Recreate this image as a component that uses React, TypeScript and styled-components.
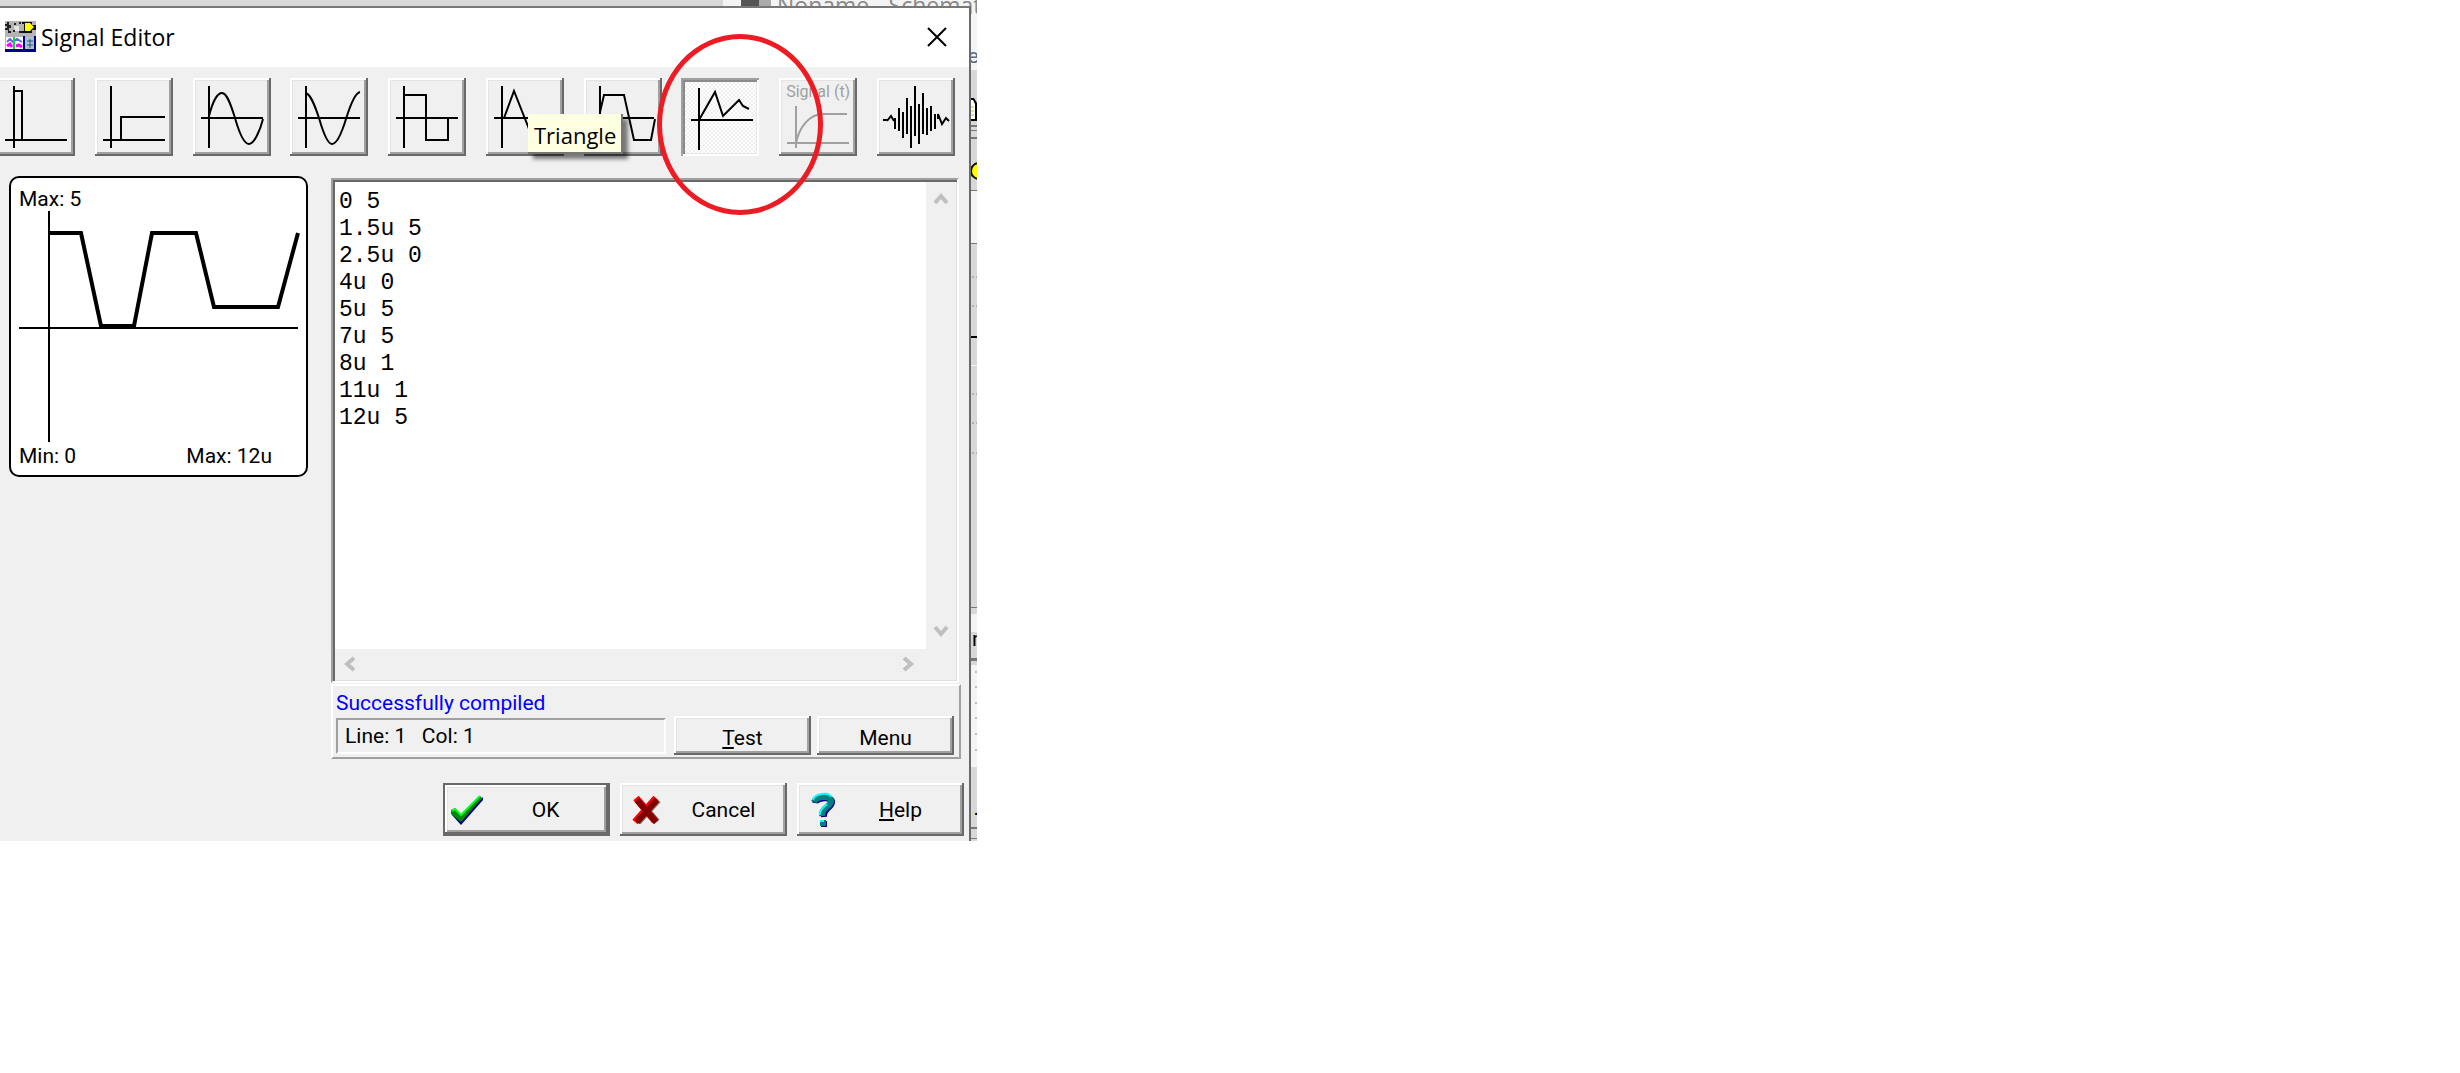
import React from "react";
import styled, { createGlobalStyle, css } from "styled-components";

const Global = createGlobalStyle`
  *, *::before, *::after { box-sizing: border-box; }
  body { margin: 0; background: #fff; }
  button, textarea { font: inherit; color: inherit; margin: 0; }
`;

const raised = css`
  border: 0;
  background: #f0f0f0;
  box-shadow: inset -2px -2px #696969, inset 2px 2px #fff,
    inset -4px -4px #a0a0a0, inset 3px 3px #e3e3e3;
`;

const Page = styled.main`
  display: flex;
  font-family: Roboto, "Liberation Sans", sans-serif;
  font-size: 21px;
  line-height: 26px;
  color: #000;
`;

const Desktop = styled.div`
  position: relative;
  overflow: hidden;
  width: 100%;
  max-width: 977px;
  padding: 6px 6px 0 0;
`;

const Backdrop = styled.div`
  position: absolute;
  inset: 0;
  background: #d8d8d8;
`;

const BackTitle = styled.div`
  position: absolute;
  top: -9px;
  left: 723px;
  right: 0;
  height: 79px;
  padding-left: 18px;
  display: flex;
  align-items: flex-start;
  gap: 6px;
  background: #f4f4f4;
  color: #8a8a8a;
  font-family: "Open Sans", "Noto Sans", sans-serif;
  font-size: 23px;
  line-height: 28px;
  white-space: pre;
`;

const BackIcon = styled.span`
  flex: none;
  width: 30px;
  height: 16px;
  background: linear-gradient(90deg, #555 60%, #aaa 60%);
`;

const BackEdge = styled.svg`
  position: absolute;
  top: 0;
  right: 0;
  width: 6px;
  height: 841px;
`;

const BackLabel = styled.span<{ $top: number; $color?: string }>`
  position: absolute;
  top: ${(p) => p.$top}px;
  right: -2px;
  color: ${(p) => p.$color || "#000"};
`;

const Dialog = styled.section`
  position: relative;
  display: flex;
  flex-direction: column;
  background: #f0f0f0;
  border-top: 2px solid #777;
  border-right: 2px solid #6a6a6a;
`;

const TitleBar = styled.header`
  display: flex;
  align-items: center;
  gap: 5px;
  height: 59px;
  padding: 0 19px 2px 5px;
  background: #fff;
`;

const Title = styled.h1`
  flex: 1;
  margin: 0;
  font-family: "Open Sans", "Noto Sans", sans-serif;
  font-size: 23px;
  font-weight: 400;
  line-height: 30px;
`;

const CloseButton = styled.button`
  display: flex;
  padding: 3px;
  border: 0;
  background: none;
`;

const Toolbar = styled.div`
  display: flex;
  justify-content: space-between;
  margin: 11px 14px 0 -3px;
`;

const Tool = styled.button<{ $pressed?: boolean }>`
  position: relative;
  width: 78px;
  height: 78px;
  padding: 0;
  ${raised}
  ${(p) =>
    p.$pressed &&
    css`
      background: repeating-conic-gradient(#fff 0 25%, #f0f0f0 0 50%) 0 0 / 4px 4px;
      box-shadow: inset 2px 2px #a0a0a0, inset -2px -2px #fff,
        inset 4px 4px #8a8a8a, inset -3px -3px #e8e8e8;
    `}
  & svg { display: block; }
  &:disabled { color: #a0a0a0; }
`;

const ToolLabel = styled.span`
  position: absolute;
  top: 4px;
  left: 7px;
  font-size: 16px;
  line-height: 20px;
  white-space: nowrap;
`;

const Body = styled.div`
  display: flex;
  align-items: flex-start;
  gap: 23px;
  padding: 20px 8px 0 9px;
`;

const Preview = styled.figure`
  flex: none;
  width: 299px;
  margin: 0;
  border: 2px solid #000;
  border-radius: 10px;
  background: #fff;
  & svg { display: block; }
`;

const PreviewLabel = styled.div`
  height: 33px;
  padding: 8px 8px 0;
`;

const PreviewRange = styled.figcaption`
  display: flex;
  justify-content: space-between;
  height: 33px;
  padding: 1px 34px 0 8px;
`;

const EditorColumn = styled.div`
  flex: 1;
  min-width: 0;
  padding-top: 2px;
`;

const Editor = styled.div`
  display: grid;
  grid-template-columns: 1fr 31px;
  grid-template-rows: 467px 32px;
  margin-right: 2px;
  border: 2px solid #a0a0a0;
  border-color: #a0a0a0 #fff #fff #a0a0a0;
  background: #f0f0f0;
  box-shadow: inset 2px 2px #696969, inset -1px -1px #e0e0e0;
  padding: 2px 0 0 2px;
`;

const Code = styled.textarea`
  display: block;
  width: 100%;
  height: 100%;
  padding: 7px 4px;
  border: 0;
  outline: 0;
  resize: none;
  overflow: hidden;
  background: #fff;
  font-family: "Liberation Mono", monospace;
  font-size: 23px;
  line-height: 27px;
`;

const ScrollBar = styled.div<{ $vertical?: boolean }>`
  display: flex;
  flex-direction: ${(p) => (p.$vertical ? "column" : "row")};
  justify-content: space-between;
  align-items: center;
  padding: ${(p) => (p.$vertical ? "10px 2px 10px 0" : "0 10px 2px 8px")};
`;

const ScrollButton = styled.button`
  display: flex;
  padding: 0;
  border: 0;
  background: none;
`;

const StatusPanel = styled.div`
  display: flex;
  flex-direction: column;
  margin-top: 1px;
  height: 75px;
  padding: 4px 5px 3px 3px;
  border: 2px solid #fff;
  border-color: #fff #a0a0a0 #a0a0a0 #fff;
`;

const Message = styled.output`
  color: #00f;
  height: 26px;
`;

const StatusRow = styled.div`
  display: flex;
  gap: 6px;
`;

const Position = styled.div`
  flex: 1;
  height: 36px;
  margin: 2px 2px 0 0;
  padding: 3px 7px;
  border: 2px solid #a0a0a0;
  border-color: #a0a0a0 #fff #fff #a0a0a0;
  white-space: pre;
`;

const SmallButton = styled.button`
  width: 137px;
  height: 39px;
  padding: 4px 0 0;
  ${raised}
`;

const Actions = styled.footer`
  display: flex;
  justify-content: flex-end;
  gap: 10px;
  padding: 24px 5px 5px 0;
`;

const Action = styled.button<{ $primary?: boolean }>`
  display: flex;
  align-items: center;
  width: 167px;
  height: 53px;
  padding: 0 4px 0 8px;
  ${raised}
  ${(p) =>
    p.$primary &&
    css`
      border: 2px solid #696969;
      padding: 0 0 0 6px;
    `}
`;

const ActionText = styled.span`
  flex: 1;
  text-align: center;
`;

const Hint = styled.div`
  position: absolute;
  top: 114px;
  left: 528px;
  height: 40px;
  padding: 5px 5px 0 6px;
  background: #ffffe1;
  border-right: 2px solid #767676;
  border-bottom: 2px solid #767676;
  box-shadow: 5px 5px 4px rgba(0, 0, 0, 0.5);
  font-family: "Open Sans", "Noto Sans", sans-serif;
  font-size: 22px;
  line-height: 32px;
`;

const Ring = styled.div`
  position: absolute;
  top: 34px;
  left: 657px;
  width: 166px;
  height: 181px;
  border: 5px solid #ed1c24;
  border-radius: 50%;
  pointer-events: none;
`;

const AXES = "M16 8V70M8 40H70";

type ToolDef = { name: string; d: string; pressed?: boolean; label?: string };

const TOOLS: ToolDef[] = [
  { name: "Pulse", d: "M17 8V70M8 62H70M17 13H25V62" },
  { name: "Unit step", d: "M16 8V70M8 62H70M26 62V39H70" },
  { name: "Sine", d: AXES + "M16 38C20 22 25 15 29 15C34 15 38 27 42 40C46 54 51 66 56 66C61 66 67 53 70 41" },
  { name: "Cosine", d: AXES + "M16 15C21 17 25 28 29 40C33 54 38 66 42 66C47 66 52 54 56 41C60 28 65 15 70 14" },
  { name: "Square", d: AXES + "M16 17H38V62H60V40" },
  { name: "Triangle", d: AXES + "M18 40L28 13L49 66L59 40" },
  { name: "Trapezoid", d: AXES + "M16 34L20 17H40L50 62H67L71 41" },
  { name: "Piecewise linear", pressed: true, d: "M18 10V72M10 42H72M18 42L34 14L42 38L58 22L62 28L68 31" },
  { name: "Signal", label: "Signal (t)", d: "M17 28V70M8 65H70M17 65C20 50 30 36 44 36H68" },
  {
    name: "Wave",
    d: "M6 42H10M10 43L14 38L17 43M18 40V51M22 30V53M26 34V60M30 20V56M34 28V70M38 8V58M42 26V66M46 15V56M50 30V57M54 28V53M58 36V51M61 41V36L65 46L69 40L72 43",
  },
];

const CODE = ["0 5", "1.5u 5", "2.5u 0", "4u 0", "5u 5", "7u 5", "8u 1", "11u 1", "12u 5"].join("\n");

const CHEVRONS = {
  up: "M2 11L8 4L14 11",
  down: "M2 4L8 11L14 4",
  left: "M11 2L4 8L11 14",
  right: "M4 2L11 8L4 14",
};

function Scroll({ to }: { to: keyof typeof CHEVRONS }) {
  return (
    <ScrollButton type="button" aria-label={`Scroll ${to}`}>
      <svg width="16" height="16" fill="none" stroke="#bfbfbf" strokeWidth="4">
        <path d={CHEVRONS[to]} />
      </svg>
    </ScrollButton>
  );
}

function AppIcon() {
  return (
    <svg width="31" height="31" viewBox="0 0 31 31" aria-hidden="true">
      <path fill="#b4b4b4" d="M0 0H31V31H0z" />
      <path fill="#222" d="M0 3H2V1H4V4H6V7H4V10H6V12H3V9H0V7H2V5H0zM9 2H11V4H9zM14 1H16V3H14zM8 9H10V11H8zM14 10H17V12H14z" />
      <path fill="#e8e8e8" d="M9 5H14V10H10z" />
      <path fill="#111" d="M17 1H27V4H31V9H27V12H17V10H19V3H17z" />
      <path fill="#ff0" d="M20 2H25L29 6L25 10H20z" />
      <path fill="#fff" d="M1 16H18V28H1z" />
      <path stroke="#f0f" strokeWidth="3" fill="none" d="M2 25L5 23L7 26M11 25L14 24L17 26" />
      <path stroke="#66d" strokeWidth="2" fill="none" d="M2 21L5 18L8 21L12 18L17 21" />
      <path stroke="#0d4" strokeWidth="2" d="M9 16V28" />
      <path fill="#a8c4cc" d="M20 16H28V28H20z" />
      <path stroke="#357" strokeWidth="1" d="M22 20H28M22 24H28M25 18V27" />
      <path fill="#008" d="M0 28H31V31H0zM29 15H31V31H29zM18 15H20V28H18z" />
    </svg>
  );
}

export default function App() {
  return (
    <Page>
      <Global />
      <Desktop>
        <Backdrop>
          <BackTitle>
            <BackIcon />
            <span>Noname - Schemat</span>
          </BackTitle>
          <BackEdge viewBox="0 0 6 841">
            <path fill="#f4f4f4" d="M0 191H6V243H0zM0 614H6V632H0zM0 665H6V767H0z" />
            <path fill="#777" d="M0 125H6V127H0zM0 130H6V131H0zM0 137H6V139H0zM0 190H6V191H0zM0 243H6V244H0zM0 607H6V608H0zM0 658H6V661H0zM0 827H6V829H0zM0 838H6V839H0z" />
            <path fill="#fff" d="M0 100H3L5 103V119H0z" />
            <path fill="#000" d="M0 336H6V338H0zM0 98H3L6 103V121H0V119H4V104L2 100H0z" />
            <path fill="#f4f4f4" d="M0 365H6V366H0z" />
            <path stroke="#cc0" strokeWidth="1" d="M0 107H3M0 111H3M0 115H3" />
            <circle cx="8" cy="171" r="8" fill="#ff0" stroke="#111" strokeWidth="2" />
            <path stroke="#888" strokeWidth="1" strokeDasharray="2 2" d="M1 277H6M1 306H6M1 394H6M1 423H6M1 453H6M4 672H6M4 687H6M4 703H6M4 718H6M4 734H6M4 750H6" />
          </BackEdge>
          <BackLabel $top={43} $color="#5a6a8a">e</BackLabel>
          <BackLabel $top={626}>r</BackLabel>
          <BackLabel $top={795}>.</BackLabel>
        </Backdrop>

        <Dialog aria-label="Signal Editor">
          <TitleBar>
            <AppIcon />
            <Title>Signal Editor</Title>
            <CloseButton type="button" aria-label="Close">
              <svg width="20" height="20" stroke="#000" strokeWidth="2">
                <path d="M1 1L19 19M19 1L1 19" />
              </svg>
            </CloseButton>
          </TitleBar>

          <Toolbar role="toolbar" aria-label="Signal type">
            {TOOLS.map((t) => (
              <Tool
                key={t.name}
                type="button"
                aria-label={t.name}
                aria-pressed={!!t.pressed}
                $pressed={t.pressed}
                disabled={!!t.label}
              >
                {t.label && <ToolLabel>{t.label}</ToolLabel>}
                <svg width="78" height="78" fill="none" stroke="currentColor" strokeWidth="2">
                  <path d={t.d} />
                </svg>
              </Tool>
            ))}
          </Toolbar>

          <Body>
            <Preview>
              <PreviewLabel>Max: 5</PreviewLabel>
              <svg width="295" height="231" fill="none" stroke="#000">
                <path strokeWidth="2" d="M38 0V231M8 117H287" />
                <path strokeWidth="4" d="M38 22H70L90 115H123L141 22H185L203 96H267L287 22" />
              </svg>
              <PreviewRange>
                <span>Min: 0</span>
                <span>Max: 12u</span>
              </PreviewRange>
            </Preview>

            <EditorColumn>
              <Editor>
                <Code aria-label="Signal points" spellCheck={false} defaultValue={CODE} />
                <ScrollBar $vertical>
                  <Scroll to="up" />
                  <Scroll to="down" />
                </ScrollBar>
                <ScrollBar>
                  <Scroll to="left" />
                  <Scroll to="right" />
                </ScrollBar>
              </Editor>
              <StatusPanel>
                <Message>Successfully compiled</Message>
                <StatusRow>
                  <Position>Line: 1   Col: 1</Position>
                  <SmallButton type="button"><u>T</u>est</SmallButton>
                  <SmallButton type="button">Menu</SmallButton>
                </StatusRow>
              </StatusPanel>
            </EditorColumn>
          </Body>

          <Actions>
            <Action type="button" $primary>
              <svg width="32" height="32">
                <path fill="#000080" d="M1 21L10 31L32 6V3L10 25L1 17z" />
                <path fill="#008a00" d="M0 16L4 14L10 21L29 2L31 4L10 28L0 20z" />
                <path stroke="#0f2" strokeWidth="2" fill="none" d="M1 17L4 15L10 21L29 2" />
              </svg>
              <ActionText>OK</ActionText>
            </Action>
            <Action type="button">
              <svg width="36" height="32" fill="none">
                <path stroke="#808080" strokeWidth="7" d="M10 6L29 28M30 6L10 28" />
                <path stroke="#f00" strokeWidth="7" d="M8 4L27 27M28 4L7 28" />
                <path stroke="#800000" strokeWidth="6" d="M9 6L28 28M29 6L9 28" />
              </svg>
              <ActionText>Cancel</ActionText>
            </Action>
            <Action type="button">
              <svg width="36" height="36" fill="none">
                <path stroke="#000080" strokeWidth="6" d="M10 11C11 6 27 4 27 10C27 16 18 16 19 25M16 32H22" />
                <path stroke="#008080" strokeWidth="6" d="M9 10C11 4 26 3 26 9C26 15 16 15 17 24M15 31H21" />
                <path stroke="#0ff" strokeWidth="2" d="M8 8C10 1 24 0 26 5M15 23C14 18 19 15 22 12M15 29H19" />
              </svg>
              <ActionText><u>H</u>elp</ActionText>
            </Action>
          </Actions>
        </Dialog>

        <Hint role="tooltip">Triangle</Hint>
        <Ring />
      </Desktop>
    </Page>
  );
}
